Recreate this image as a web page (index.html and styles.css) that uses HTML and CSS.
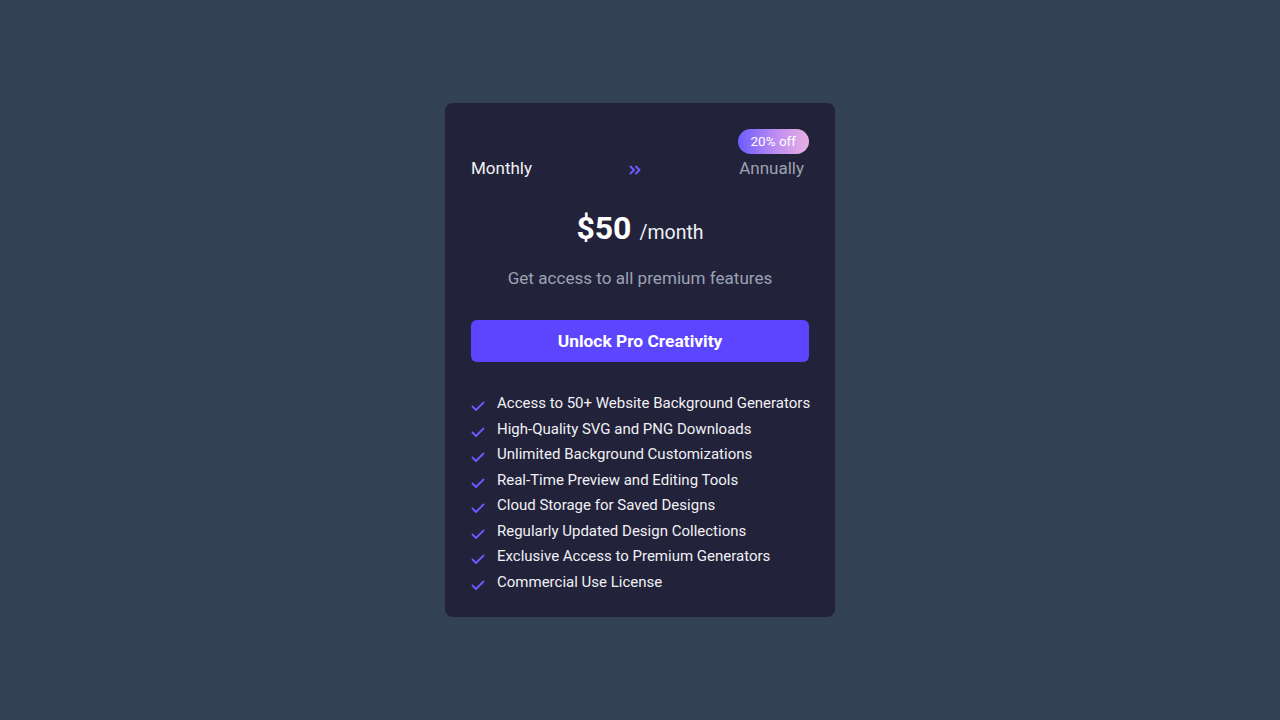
FILE: index.html
```html
<!DOCTYPE html>
<html lang="en">
<head>
<meta charset="utf-8">
<title>Pricing</title>
<link rel="stylesheet" href="styles.css">
</head>
<body>
<main class="page">
  <section class="card">
    <div class="toggle">
      <span class="opt opt-active">Monthly</span>
      <span class="arrows">
        <svg width="12" height="10" viewBox="0 0 12 10" fill="none" stroke="#6a5cff" stroke-width="2" stroke-linecap="round" stroke-linejoin="round"><path d="M1.5 1.5 5 5 1.5 8.5"/><path d="M7 1.5 10.5 5 7 8.5"/></svg>
      </span>
      <span class="annual">
        <span class="badge">20% off</span>
        <span class="opt">Annually</span>
      </span>
    </div>
    <div class="price"><span class="amount">$50</span><span class="per">/month</span></div>
    <p class="sub">Get access to all premium features</p>
    <button class="cta">Unlock Pro Creativity</button>
    <ul class="features">
      <li><svg class="check" viewBox="0 0 14 14" fill="none"><path d="M1.5 7.5 5 11 12.5 3.5" stroke="#6a5cff" stroke-width="1.8" stroke-linecap="round" stroke-linejoin="round"/></svg>Access to 50+ Website Background Generators</li>
      <li><svg class="check" viewBox="0 0 14 14" fill="none"><path d="M1.5 7.5 5 11 12.5 3.5" stroke="#6a5cff" stroke-width="1.8" stroke-linecap="round" stroke-linejoin="round"/></svg>High-Quality SVG and PNG Downloads</li>
      <li><svg class="check" viewBox="0 0 14 14" fill="none"><path d="M1.5 7.5 5 11 12.5 3.5" stroke="#6a5cff" stroke-width="1.8" stroke-linecap="round" stroke-linejoin="round"/></svg>Unlimited Background Customizations</li>
      <li><svg class="check" viewBox="0 0 14 14" fill="none"><path d="M1.5 7.5 5 11 12.5 3.5" stroke="#6a5cff" stroke-width="1.8" stroke-linecap="round" stroke-linejoin="round"/></svg>Real-Time Preview and Editing Tools</li>
      <li><svg class="check" viewBox="0 0 14 14" fill="none"><path d="M1.5 7.5 5 11 12.5 3.5" stroke="#6a5cff" stroke-width="1.8" stroke-linecap="round" stroke-linejoin="round"/></svg>Cloud Storage for Saved Designs</li>
      <li><svg class="check" viewBox="0 0 14 14" fill="none"><path d="M1.5 7.5 5 11 12.5 3.5" stroke="#6a5cff" stroke-width="1.8" stroke-linecap="round" stroke-linejoin="round"/></svg>Regularly Updated Design Collections</li>
      <li><svg class="check" viewBox="0 0 14 14" fill="none"><path d="M1.5 7.5 5 11 12.5 3.5" stroke="#6a5cff" stroke-width="1.8" stroke-linecap="round" stroke-linejoin="round"/></svg>Exclusive Access to Premium Generators</li>
      <li><svg class="check" viewBox="0 0 14 14" fill="none"><path d="M1.5 7.5 5 11 12.5 3.5" stroke="#6a5cff" stroke-width="1.8" stroke-linecap="round" stroke-linejoin="round"/></svg>Commercial Use License</li>
    </ul>
  </section>
</main>
</body>
</html>
```

FILE: styles.css
```css
* { box-sizing: border-box; }
html, body { margin: 0; padding: 0; }
body {
  background: #334155;
  font-family: Roboto, "Noto Sans", sans-serif;
  color: #ffffff;
  width: 1280px;
  height: 720px;
  overflow: hidden;
}
.page {
  height: 720px;
  display: flex;
  justify-content: center;
  padding-top: 103px;
}
.card {
  width: 390px;
  height: 514px;
  background: #22223a;
  border-radius: 8px;
  padding: 25px 26px 0;
  display: flex;
  flex-direction: column;
}
.toggle {
  display: flex;
  align-items: flex-end;
  justify-content: space-between;
  height: 52px;
}
.opt {
  font-size: 17px;
  line-height: 24px;
  color: #9ca3af;
}
.opt-active { color: #f1f1f5; }
.arrows {
  display: flex;
  height: 24px;
  align-items: center;
  padding-top: 4px;
}
.annual {
  display: flex;
  flex-direction: column;
  align-items: flex-end;
}
.annual .opt { margin-right: 5px; }
.badge {
  background: linear-gradient(90deg, #6b5cff 0%, #c08ef0 55%, #e9b0e3 100%);
  color: #ffffff;
  font-size: 13.5px;
  line-height: 25px;
  height: 25px;
  padding: 0 13px;
  border-radius: 13px;
  margin-bottom: 2px;
}
.price {
  margin-top: 28px;
  display: flex;
  justify-content: center;
  align-items: baseline;
  gap: 8px;
  height: 40px;
}
.amount {
  font-size: 32px;
  font-weight: 700;
  line-height: 40px;
}
.per {
  font-size: 19.5px;
  line-height: 24px;
  color: #f1f1f5;
}
.sub {
  margin: 18px 0 0;
  text-align: center;
  font-size: 17.1px;
  line-height: 24px;
  color: #9ba3b4;
}
.cta {
  margin-top: 30px;
  height: 42px;
  border: 0;
  border-radius: 6px;
  background: #5b45ff;
  color: #ffffff;
  font-family: inherit;
  font-size: 17.4px;
  font-weight: 700;
}
.features {
  list-style: none;
  margin: 29px 0 0;
  padding: 0;
  display: flex;
  flex-direction: column;
  gap: 1.5px;
}
.features li {
  display: flex;
  align-items: center;
  gap: 12px;
  font-size: 15px;
  line-height: 24px;
  color: #f1f1f5;
  white-space: nowrap;
}
.check {
  width: 14px;
  height: 14px;
  flex: none;
  margin-top: 6px;
}
```
